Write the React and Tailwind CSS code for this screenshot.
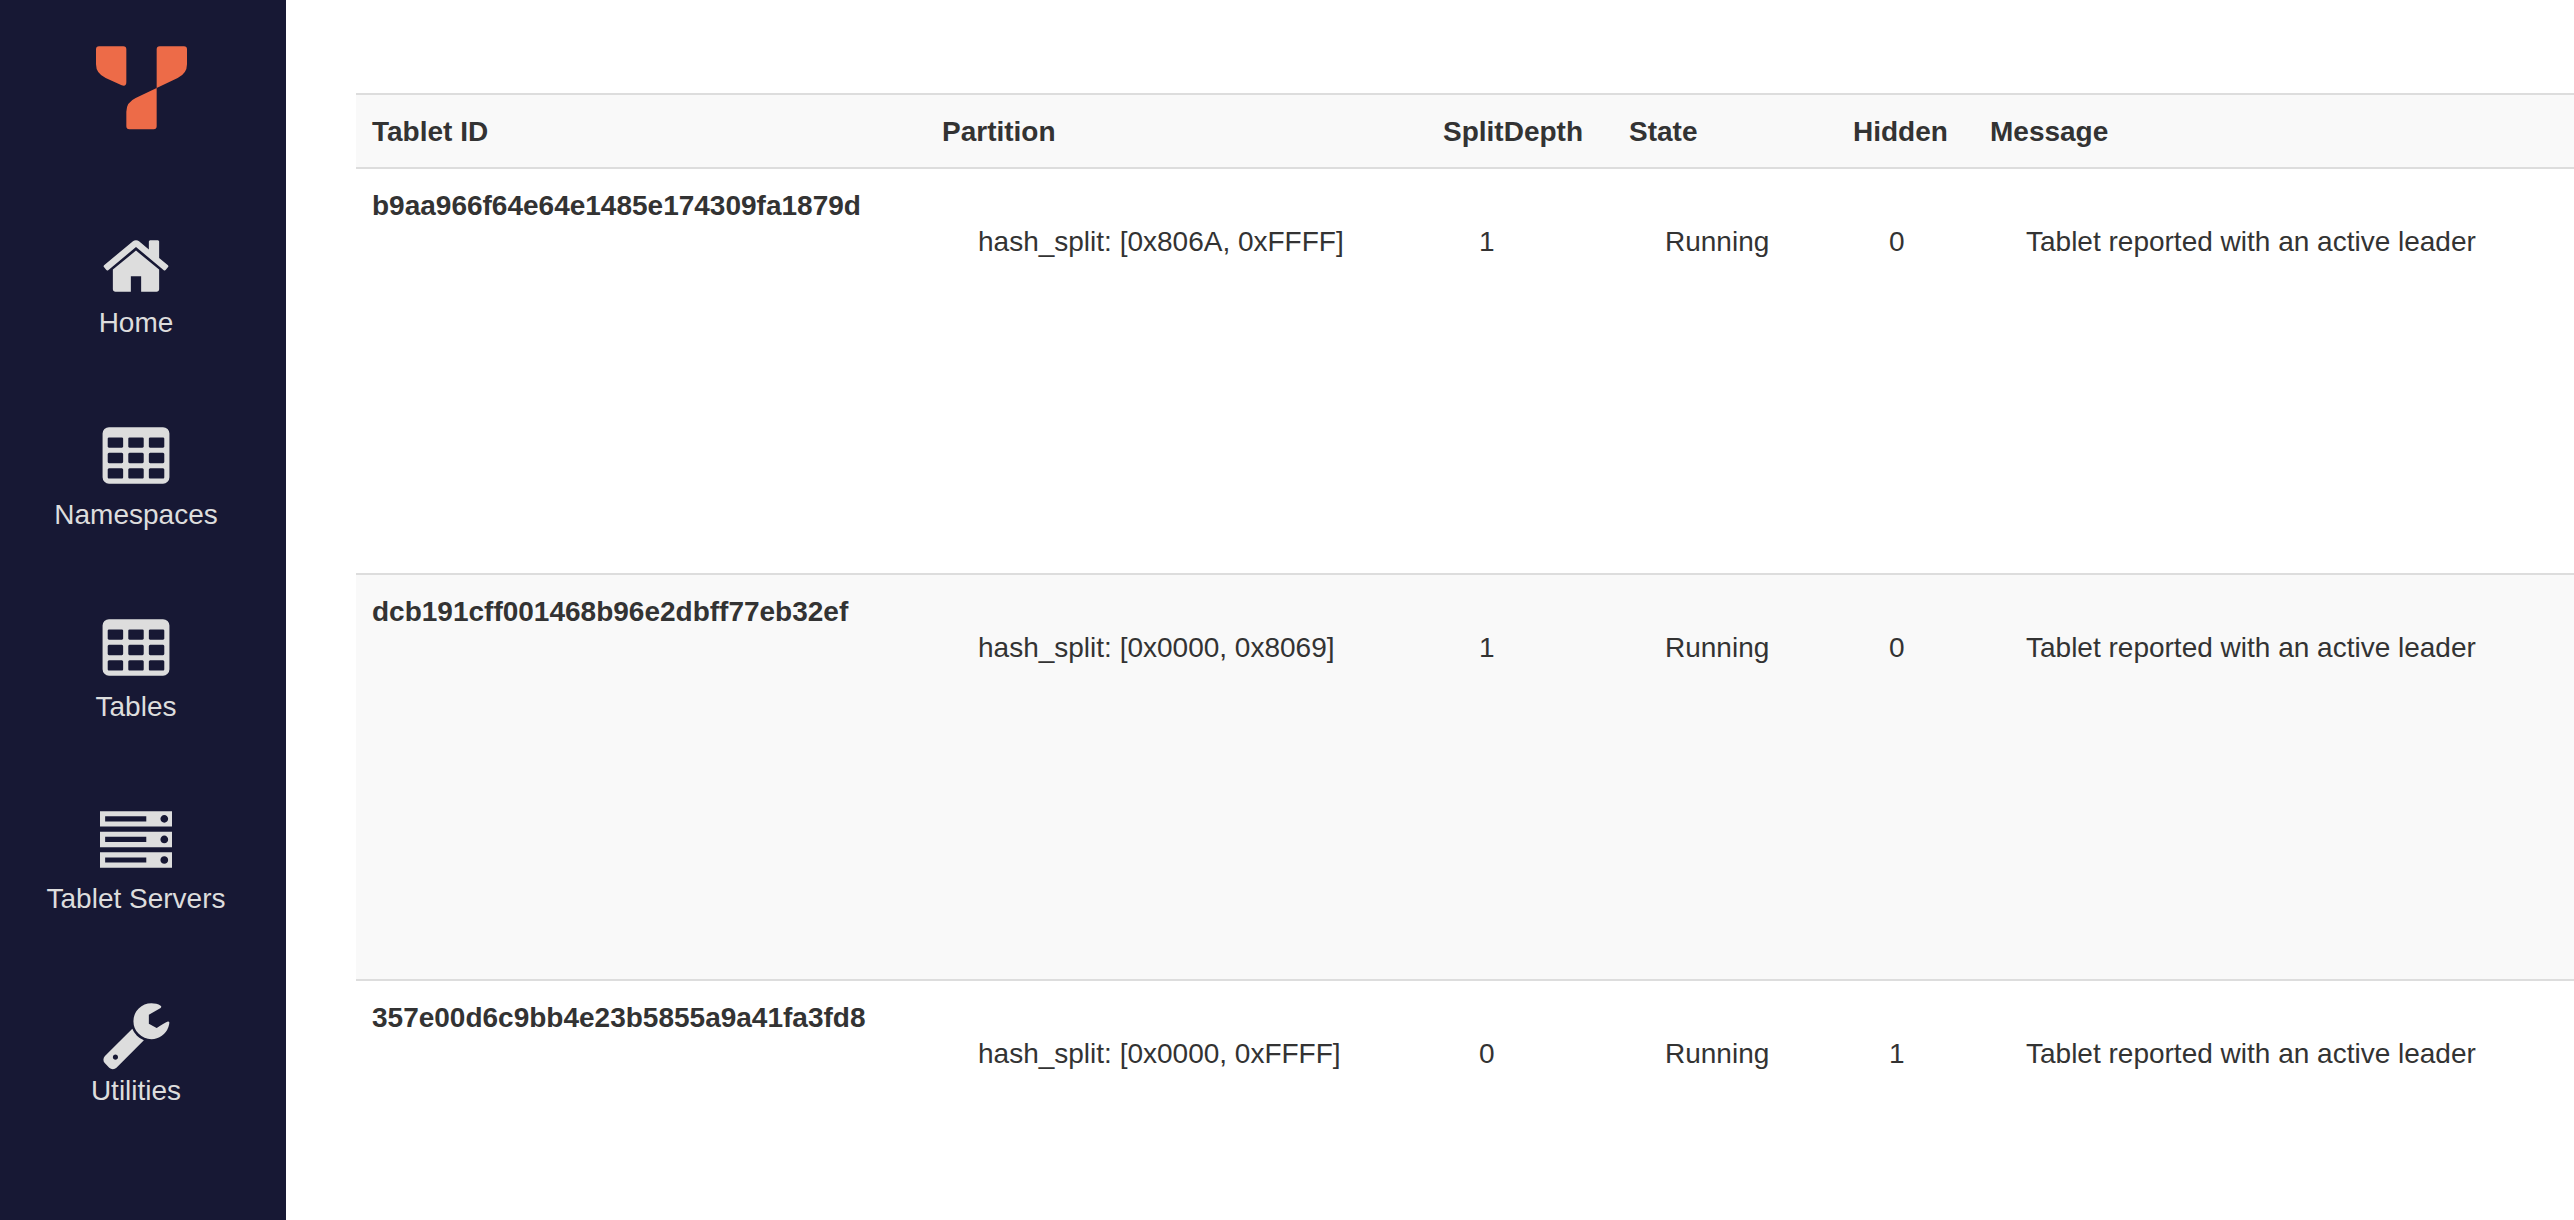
// Icon outlines share a 1792 unit grid
const icons = {
  home: "M1472 992v480q0 26-19 45t-45 19h-384v-384h-256v384h-384q-26 0-45-19t-19-45v-480q0-1 .5-3t.5-3l575-474 575 474q1 2 1 6zm223-69l-62 74q-8 9-21 11h-3q-13 0-21-7l-692-577-692 577q-12 8-24 7-13-2-21-11l-62-74q-8-10-7-23.5t11-21.5l719-599q32-26 76-26t76 26l244 204v-195q0-14 9-23t23-9h192q14 0 23 9t9 23v408l219 182q10 8 11 21.5t-7 23.5z",
  table: "M576 1376v-192q0-14-9-23t-23-9h-320q-14 0-23 9t-9 23v192q0 14 9 23t23 9h320q14 0 23-9t9-23zm0-384v-192q0-14-9-23t-23-9h-320q-14 0-23 9t-9 23v192q0 14 9 23t23 9h320q14 0 23-9t9-23zm512 384v-192q0-14-9-23t-23-9h-320q-14 0-23 9t-9 23v192q0 14 9 23t23 9h320q14 0 23-9t9-23zm-512-768v-192q0-14-9-23t-23-9h-320q-14 0-23 9t-9 23v192q0 14 9 23t23 9h320q14 0 23-9t9-23zm512 384v-192q0-14-9-23t-23-9h-320q-14 0-23 9t-9 23v192q0 14 9 23t23 9h320q14 0 23-9t9-23zm512 384v-192q0-14-9-23t-23-9h-320q-14 0-23 9t-9 23v192q0 14 9 23t23 9h320q14 0 23-9t9-23zm-512-768v-192q0-14-9-23t-23-9h-320q-14 0-23 9t-9 23v192q0 14 9 23t23 9h320q14 0 23-9t9-23zm512 384v-192q0-14-9-23t-23-9h-320q-14 0-23 9t-9 23v192q0 14 9 23t23 9h320q14 0 23-9t9-23zm0-384v-192q0-14-9-23t-23-9h-320q-14 0-23 9t-9 23v192q0 14 9 23t23 9h320q14 0 23-9t9-23zm128-320v1088q0 66-47 113t-113 47h-1344q-66 0-113-47t-47-113v-1088q0-66 47-113t113-47h1344q66 0 113 47t47 113z",
  server: "M128 1408h1024v-128h-1024v128zm0-512h1024v-128h-1024v128zm1568 448q0-40-28-68t-68-28-68 28-28 68 28 68 68 28 68-28 28-68zm-1568-960h1024v-128h-1024v128zm1568 448q0-40-28-68t-68-28-68 28-28 68 28 68 68 28 68-28 28-68zm0-512q0-40-28-68t-68-28-68 28-28 68 28 68 68 28 68-28 28-68zm96 832v384h-1792v-384h1792zm0-512v384h-1792v-384h1792zm0-512v384h-1792v-384h1792z",
  wrench: "M448 1472q0-26-19-45t-45-19-45 19-19 45 19 45 45 19 45-19 19-45zm644-420l-682 682q-37 37-90 37-52 0-91-37l-106-108q-38-36-38-90 0-53 38-91l681-681q39 98 114.5 173.5t173.5 114.5zm634-435q0 39-23 106-47 134-164.5 217.5t-258.5 83.5q-185 0-316.5-131.5t-131.5-316.5 131.5-316.5 316.5-131.5q58 0 121.5 16.5t107.5 46.5q16 11 16 28t-16 28l-293 169v224l193 107q5-3 79-48.5t135.5-81 70.5-35.5q15 0 23.5 10t8.5 25z"
};

const navItems = [
  { label: "Home", href: "#home", icon: icons.home },
  { label: "Namespaces", href: "#namespaces", icon: icons.table },
  { label: "Tables", href: "#tables", icon: icons.table },
  { label: "Tablet Servers", href: "#tablet-servers", icon: icons.server },
  { label: "Utilities", href: "#utilities", icon: icons.wrench }
];

const columns = [
  { title: "Tablet ID", width: "w-[570px]" },
  { title: "Partition", width: "w-[501px]" },
  { title: "SplitDepth", width: "w-[186px]" },
  { title: "State", width: "w-[224px]" },
  { title: "Hidden", width: "w-[137px]" },
  { title: "Message", width: "" }
];

const tablets = [
  {
    id: "b9aa966f64e64e1485e174309fa1879d",
    values: ["hash_split: [0x806A, 0xFFFF]", "1", "Running", "0", "Tablet reported with an active leader"]
  },
  {
    id: "dcb191cff001468b96e2dbff77eb32ef",
    values: ["hash_split: [0x0000, 0x8069]", "1", "Running", "0", "Tablet reported with an active leader"]
  },
  {
    id: "357e00d6c9bb4e23b5855a9a41fa3fd8",
    values: ["hash_split: [0x0000, 0xFFFF]", "0", "Running", "1", "Tablet reported with an active leader"]
  }
];

const Logo = () => (
  <svg className="w-[91px] h-[84px]" viewBox="0 0 273 250" fill="#ed6b48" aria-hidden="true">
    <path d="M9 0H82Q91 0 91 9V107Q91 122 77 117L29 95Q0 82 0 54V9Q0 0 9 0Z" />
    <path d="M191 0H264Q273 0 273 9V54Q273 82 245 95L182 125V9Q182 0 191 0Z" />
    <path d="M182 125V240Q182 249 173 249H100Q91 249 91 240V196Q91 168 119 155Z" />
  </svg>
);

const NavItem = ({ label, href, icon }) => (
  <li>
    <a href={href} className="flex flex-col items-center gap-px text-[#dddddd] hover:text-white">
      <svg className="w-18 h-18" viewBox="0 0 1792 1792" fill="currentColor" aria-hidden="true">
        <path d={icon} />
      </svg>
      <span>{label}</span>
    </a>
  </li>
);

const Sidebar = () => (
  <aside className="w-[286px] shrink-0 bg-[#171834] pt-[46px]">
    <a href="#home" aria-label="Dashboard" className="block w-fit ml-24">
      <Logo />
    </a>
    <nav className="mt-25 pr-3.5">
      <ul className="flex flex-col gap-[79px]">
        {navItems.map((item) => (
          <NavItem key={item.label} {...item} />
        ))}
      </ul>
    </nav>
  </aside>
);

const TabletTable = () => (
  <table className="w-full table-fixed border-collapse text-left">
    <thead>
      <tr className="bg-[#f9f9f9] border-t-2 border-[#dddddd]">
        {columns.map((column) => (
          <th key={column.title} scope="col" className={`px-4 pt-[17px] pb-[15px] font-bold ${column.width}`}>
            {column.title}
          </th>
        ))}
      </tr>
    </thead>
    <tbody>
      {tablets.map((tablet) => (
        <tr key={tablet.id} className="h-[406px] border-t-2 border-[#dddddd] even:bg-[#f9f9f9] align-top">
          <th scope="row" className="px-4 pt-[17px] pb-[15px] font-bold">{tablet.id}</th>
          {tablet.values.map((value, index) => (
            <td key={index} className="px-4 pt-[17px] pb-[15px]">
              <div className="pt-9 pl-9 whitespace-nowrap">{value}</div>
            </td>
          ))}
        </tr>
      ))}
    </tbody>
  </table>
);

const App = () => (
  <div className="flex h-screen overflow-hidden bg-white text-[28px] leading-10 text-[#333333] font-['Helvetica_Neue','Liberation_Sans',Arial,sans-serif]">
    <Sidebar />
    <main className="flex-1 min-w-0 overflow-y-auto [scrollbar-width:none] pt-[93px] pl-[70px]">
      <TabletTable />
    </main>
  </div>
);

export default App;
